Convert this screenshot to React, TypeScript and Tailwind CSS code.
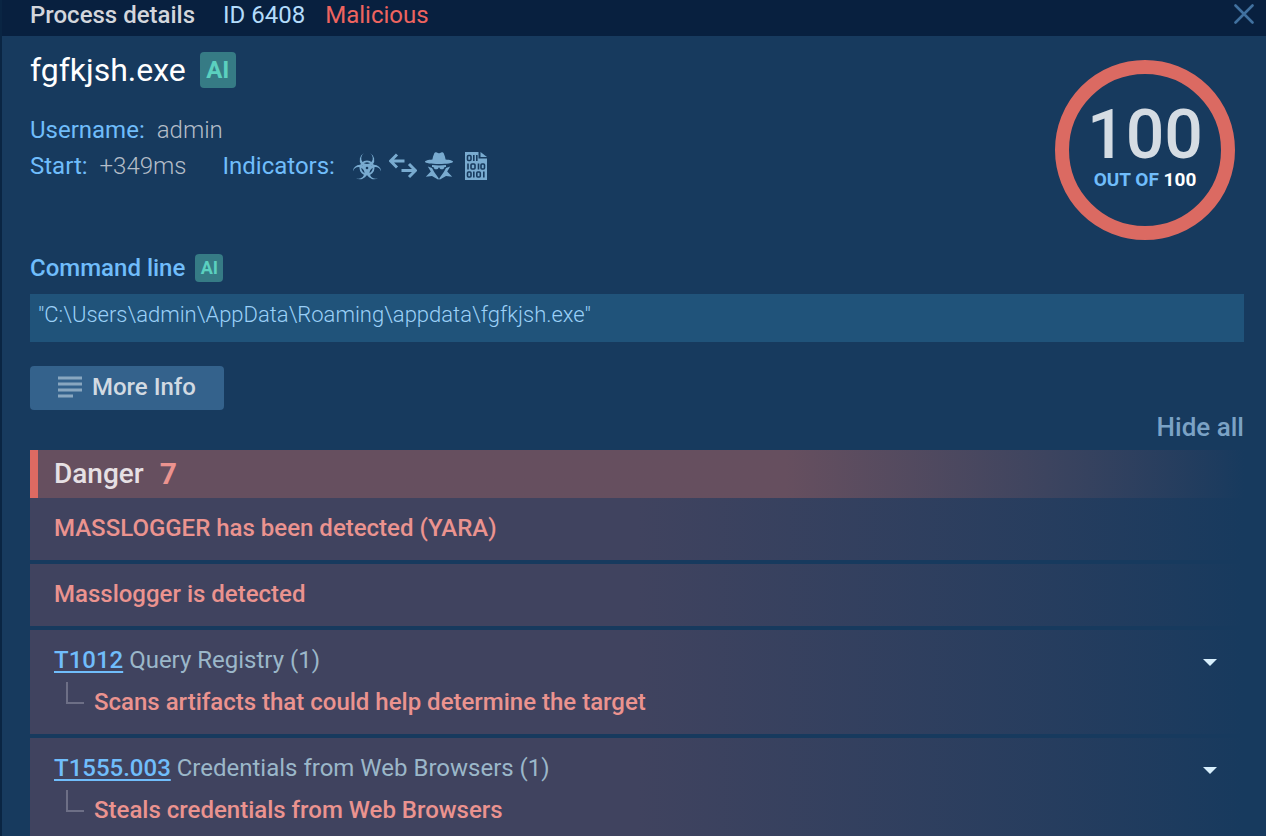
import { useState } from 'react';
import type { ReactNode } from 'react';

type Incident = { id?: string; name?: string; text: string };

const incidents: Incident[] = [
  { text: 'MASSLOGGER has been detected (YARA)' },
  { text: 'Masslogger is detected' },
  { id: 'T1012', name: 'Query Registry', text: 'Scans artifacts that could help determine the target' },
  { id: 'T1555.003', name: 'Credentials from Web Browsers', text: 'Steals credentials from Web Browsers' },
];

export default function App() {
  const [hidden, setHidden] = useState(false);

  return (
    <div className="h-screen overflow-hidden flex flex-col border-l-2 border-[#0a2543] bg-[#173a5e] font-['Roboto',sans-serif] text-2xl leading-9">
      <header className="h-9 shrink-0 flex items-start justify-between pl-7 pr-3 bg-[#08203f] leading-[30px]">
        <div className="flex">
          <h1 className="font-medium text-[#d3d6dc]">Process details</h1>
          <span className="ml-7 text-[#b3dcfb]">ID 6408</span>
          <span className="ml-5 text-[#ee645f]">Malicious</span>
        </div>
        <button aria-label="Close" className="h-7 text-[#41719f]">
          <CloseIcon />
        </button>
      </header>

      <main className="pl-7 pr-[22px] pt-4">
        <div className="flex justify-between">
          <ProcessSummary />
          <ScoreRing score={100} />
        </div>

        <section>
          <div className="flex items-center gap-[10px]">
            <h3 className="font-medium text-[#70bdfb]">Command line</h3>
            <button className="size-7 rounded bg-[#367b85] text-[#5bd0bf] text-lg leading-7 font-bold">AI</button>
          </div>
          <p className="mt-2 h-12 px-2 bg-[#20537a] text-[#9bd0f7] text-[22px] leading-[42px] font-light">
            "C:\Users\admin\AppData\Roaming\appdata\fgfkjsh.exe"
          </p>
        </section>

        <button className="mt-6 h-11 px-7 pb-[2px] flex items-center gap-[10px] rounded bg-[#34628c] text-[#d2dae2] font-medium leading-10">
          <LinesIcon />
          More Info
        </button>

        <div className="flex justify-end h-10">
          <button className="h-[34px] text-[26px] leading-[34px] font-medium text-[#7ba2c5]" onClick={() => setHidden(!hidden)}>
            Hide all
          </button>
        </div>

        <section>
          <h3 className="h-12 flex items-center gap-4 pl-4 border-l-8 border-[#dd6a62] bg-linear-to-r from-[#664f5f] from-62% to-[#173a5e] text-[28px] font-medium text-[#e6e0e4]">
            Danger <span className="text-3xl font-bold text-[#eb938f]">7</span>
          </h3>
          {!hidden && (
            <ul className="flex flex-col gap-1">
              {incidents.map((item) => <IncidentRow key={item.text} item={item} />)}
            </ul>
          )}
        </section>
      </main>
    </div>
  );
}

function ProcessSummary() {
  return (
    <div className="h-[198px]">
      <div className="flex items-center gap-[14px]">
        <h2 className="text-[32px] leading-[34px] text-white">fgfkjsh.exe</h2>
        <button className="size-9 rounded bg-[#367b85] text-[#5bd0bf] font-bold">AI</button>
      </div>
      <dl className="mt-6">
        <div className="flex gap-3">
          <dt className="text-[#70bdfb]">Username:</dt>
          <dd className="font-light text-[#b4bdc8]">admin</dd>
        </div>
        <div className="flex">
          <dt className="text-[#70bdfb]">Start:</dt>
          <dd className="ml-3 font-light text-[#b4bdc8]">+349ms</dd>
          <dt className="ml-9 text-[#70bdfb]">Indicators:</dt>
          <dd className="ml-[18px] flex items-center gap-2 text-[#79abd0]">
            <BiohazardIcon />
            <ArrowsIcon />
            <SpyIcon />
            <BinaryFileIcon />
          </dd>
        </div>
      </dl>
    </div>
  );
}

function ScoreRing({ score }: { score: number }) {
  return (
    <div className="mt-2 mr-[9px] size-[180px] shrink-0 flex flex-col items-center rounded-full border-14 border-[#db6a62] pt-7 font-medium">
      <span className="text-[68px] leading-[66px] text-[#d5dce3]">{score}</span>
      <span className="text-[19px] leading-6 font-bold text-[#70bdfb]">
        OUT OF <span className="text-white">100</span>
      </span>
    </div>
  );
}

function IncidentRow({ item }: { item: Incident }) {
  const [open, setOpen] = useState(true);

  return (
    <li className="px-6 pt-3 pb-[14px] bg-linear-to-r from-[#40435f] from-50% to-[#173a5e]">
      {item.id && (
        <div className="flex items-center justify-between">
          <p className="text-[#9bb7c9]">
            <a href="#technique" className="font-medium text-[#70bdfb] underline decoration-2 underline-offset-3">{item.id}</a>{' '}
            {item.name} (1)
          </p>
          <button aria-label={`Toggle ${item.id}`} className="px-[3px] pt-1 text-[#d8effc]" onClick={() => setOpen(!open)}>
            <CaretIcon />
          </button>
        </div>
      )}
      {!item.id && <p className="font-medium text-[#eb938f]">{item.text}</p>}
      {item.id && open && (
        <div className="mt-1 flex pl-3 font-medium text-[#eb938f]">
          <span className="mr-[10px] h-[22px] w-[18px] border-l-2 border-b-2 border-[#6d6f86]" />
          <p className="pt-[2px]">{item.text}</p>
        </div>
      )}
    </li>
  );
}

function Icon({ width = 28, height = 28, children }: { width?: number; height?: number; children: ReactNode }) {
  return (
    <svg width={width} height={height} viewBox={`0 0 ${width} ${height}`} fill="none" aria-hidden="true">
      {children}
    </svg>
  );
}

function CloseIcon() {
  return (
    <Icon width={20} height={20}>
      <path d="M1.5 1.5l17 17M18.5 1.5l-17 17" stroke="currentColor" strokeWidth="2.6" strokeLinecap="round" />
    </Icon>
  );
}

function LinesIcon() {
  return (
    <Icon width={24} height={22}>
      <path d="M0 2h24M0 8h24M0 14h24M0 20h15" stroke="#89a7c0" strokeWidth="3" />
    </Icon>
  );
}

function CaretIcon() {
  return (
    <Icon width={14} height={7}>
      <path d="M0 0h14L7 7z" fill="currentColor" />
    </Icon>
  );
}

function BiohazardIcon() {
  return (
    <Icon>
      <circle cx="14" cy="16" r="6.6" stroke="currentColor" strokeWidth="1.8" />
      {[0, 120, 240].map((angle) => (
        <path
          key={angle}
          d="M10.950 1.370A7.300 7.300 0 1 0 17.050 1.370A5.800 5.800 0 1 1 10.950 1.370z"
          transform={`rotate(${angle} 14 16)`}
          fill="currentColor"
        />
      ))}
      <circle cx="14" cy="16" r="2.600" fill="currentColor" />
      <circle cx="14" cy="16" r="1.300" fill="#173a5e" />
    </Icon>
  );
}

function ArrowsIcon() {
  return (
    <Icon>
      <path d="M15.5 9H2M8 2.500L1.500 9 8 15.500M12.500 18.500H26M20 12L26.500 18.500 20 25" stroke="currentColor" strokeWidth="3" />
    </Icon>
  );
}

function SpyIcon() {
  return (
    <Icon>
      <g fill="currentColor">
        <path d="M9.300 1.200C9.800.2 10.700-.1 11.700.4l1.300.6c.7.3 1.300.3 2 0l1.300-.6c1-.5 1.900-.2 2.400.8 1 2.100 1.600 4.400 1.900 6.400 4.300.4 7.400 1.200 7.400 2.100 0 1.300-6.300 2.300-14 2.300S0 11 0 9.700c0-.9 3.100-1.700 7.400-2.100.3-2 .9-4.300 1.900-6.400z" />
        <path d="M7 13c4.500.5 9.500.5 14 0v2h-1.500c-.3 1.500-1.200 2.300-2.500 2.300-1.400 0-2.300-.7-2.600-1.900h-.8c-.3 1.200-1.200 1.900-2.600 1.900-1.300 0-2.200-.8-2.500-2.300H7z" />
        <path d="M2.800 14.500L7 16l2.200 4 4.600 6.500-.4 1.200L7 24l-6.200.8 5-5.300z" />
        <path d="M25.200 14.500L21 16l-2.200 4-4.600 6.500.4 1.200L21 24l6.200.8-5-5.300z" />
      </g>
    </Icon>
  );
}

function BinaryFileIcon() {
  return (
    <Icon>
      <path d="M4 0h13.500v6.500H26V28H4z" fill="currentColor" />
      <path d="M19.500 0L26 5H19.500z" fill="currentColor" />
      <g stroke="#173a5e" strokeWidth="1.600">
        <rect x="6.500" y="3.500" width="3.500" height="5" rx="1" />
        <path d="M12.800 3v6M15.800 3v6" />
        <path d="M7 11.500v6M17.500 11.500v6" />
        <rect x="10" y="12" width="4" height="5" rx="1" />
        <rect x="20" y="12" width="3.500" height="5" rx="1" />
        <rect x="6.500" y="20" width="3.500" height="5" rx="1" />
        <path d="M12.800 19.500v6M22.800 19.500v6" />
        <rect x="15.800" y="20" width="3.500" height="5" rx="1" />
      </g>
    </Icon>
  );
}
